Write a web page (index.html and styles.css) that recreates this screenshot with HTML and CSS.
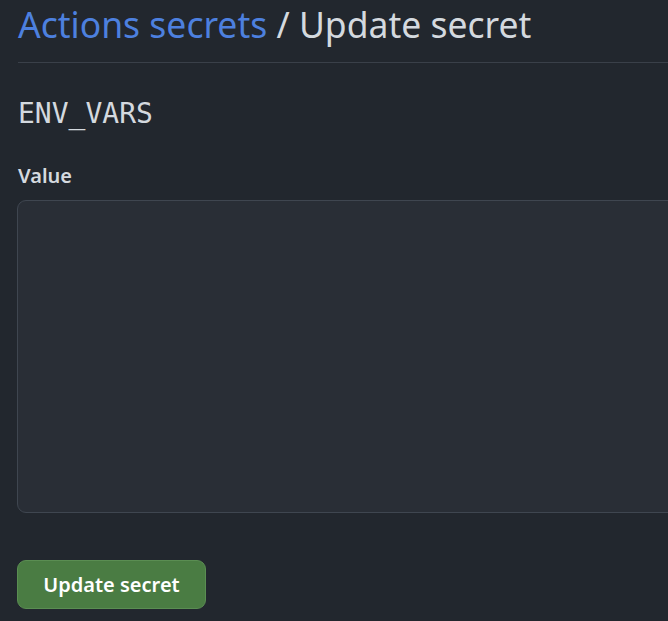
FILE: index.html
```html
<!DOCTYPE html>
<html>
<head>
<meta charset="utf-8">
<link rel="stylesheet" href="styles.css">
</head>
<body>
<div class="page">
  <div class="subhead">
    <h2 class="subhead-heading"><a class="crumb" href="#">Actions secrets</a> / Update secret</h2>
  </div>
  <div class="secret-name">ENV_VARS</div>
  <label class="label" for="value">Value</label>
  <textarea id="value" class="value-input"></textarea>
  <button class="btn-primary" type="button">Update secret</button>
</div>
</body>
</html>
```
FILE: styles.css
```css
html, body {
  margin: 0;
  padding: 0;
  background: #22272e;
  overflow: hidden;
}
.page {
  padding: 0 0 0 18px;
  width: 700px;
  font-family: "Noto Sans", "Open Sans", sans-serif;
  color: #d8dde3;
}
.subhead {
  height: 63px;
  border-bottom: 1px solid #3a4049;
  box-sizing: border-box;
}
.subhead-heading {
  margin: 0;
  font-size: 35.5px;
  font-weight: 400;
  line-height: 48px;
  color: #d4d9df;
}
.crumb {
  color: #4d80df;
  text-decoration: none;
}
.secret-name {
  margin-top: 33px;
  font-family: "DejaVu Sans Mono", monospace;
  font-size: 28px;
  line-height: 36px;
  color: #d4d9df;
}
.label {
  display: block;
  margin-top: 29px;
  font-size: 20px;
  font-weight: 600;
  line-height: 30px;
  color: #d4d9df;
}
.value-input {
  display: block;
  margin: 9px 0 0 -1px;
  width: 700px;
  height: 313px;
  box-sizing: border-box;
  background: #292e36;
  border: 1px solid #3f4650;
  border-radius: 9px;
  resize: none;
  outline: none;
}
.btn-primary {
  display: block;
  margin: 47px 0 0 -1px;
  width: 189px;
  height: 49px;
  box-sizing: border-box;
  background: #4a7c43;
  border: 1px solid #5a8d52;
  border-radius: 9px;
  color: #ffffff;
  font-family: "Noto Sans", "Open Sans", sans-serif;
  font-size: 20px;
  font-weight: 600;
  padding: 0;
}
```
